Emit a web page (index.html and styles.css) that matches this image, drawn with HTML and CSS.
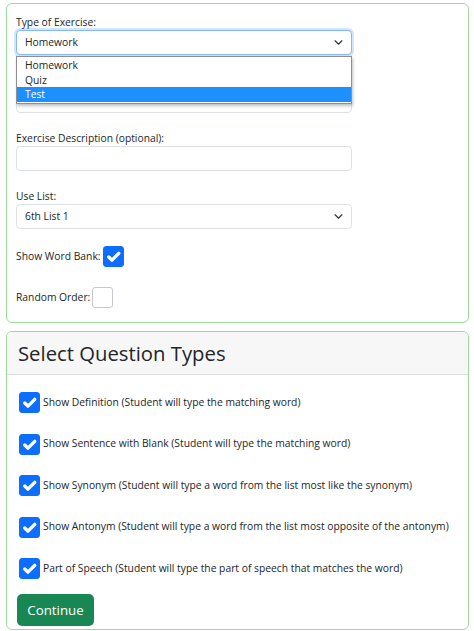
FILE: index.html
```html
<!DOCTYPE html>
<html lang="en">
<head>
<meta charset="utf-8">
<title>Exercise</title>
<link rel="stylesheet" href="styles.css">
</head>
<body>
<div class="card form-card">
  <div class="field">
    <label class="lbl">Type of Exercise:</label>
    <div class="select-wrap">
      <div class="control select focused">
        <span>Homework</span>
        <svg class="chev" viewBox="0 0 16 16" width="9" height="9"><path d="m2 5 6 6 6-6" fill="none" stroke="#343a40" stroke-width="2.2" stroke-linecap="round" stroke-linejoin="round"/></svg>
      </div>
      <ul class="dropdown">
        <li>Homework</li>
        <li>Quiz</li>
        <li class="active">Test</li>
      </ul>
    </div>
  </div>
  <div class="field">
    <label class="lbl" aria-label="Exercise Name"></label>
    <div class="control"></div>
  </div>
  <div class="field">
    <label class="lbl">Exercise Description (optional):</label>
    <div class="control"></div>
  </div>
  <div class="field">
    <label class="lbl">Use List:</label>
    <div class="control select">
      <span>6th List 1</span>
      <svg class="chev" viewBox="0 0 16 16" width="9" height="9"><path d="m2 5 6 6 6-6" fill="none" stroke="#343a40" stroke-width="2.2" stroke-linecap="round" stroke-linejoin="round"/></svg>
    </div>
  </div>
  <div class="inline-check first">
    <span>Show Word Bank:</span>
    <span class="box checked"><svg viewBox="0 0 20 20" width="21" height="21"><path d="m5.5 10.5 3 3 6.5-6.5" fill="none" stroke="#fff" stroke-width="3.2" stroke-linecap="round" stroke-linejoin="round"/></svg></span>
  </div>
  <div class="inline-check second">
    <span>Random Order:</span>
    <span class="box"></span>
  </div>
</div>

<div class="card types-card">
  <div class="card-header">Select Question Types</div>
  <div class="card-body">
    <div class="rows">
      <div class="row">
        <span class="box checked"><svg viewBox="0 0 20 20" width="21" height="21"><path d="m5.5 10.5 3 3 6.5-6.5" fill="none" stroke="#fff" stroke-width="3.2" stroke-linecap="round" stroke-linejoin="round"/></svg></span>
        <span>Show Definition (Student will type the matching word)</span>
      </div>
      <div class="row">
        <span class="box checked"><svg viewBox="0 0 20 20" width="21" height="21"><path d="m5.5 10.5 3 3 6.5-6.5" fill="none" stroke="#fff" stroke-width="3.2" stroke-linecap="round" stroke-linejoin="round"/></svg></span>
        <span>Show Sentence with Blank (Student will type the matching word)</span>
      </div>
      <div class="row">
        <span class="box checked"><svg viewBox="0 0 20 20" width="21" height="21"><path d="m5.5 10.5 3 3 6.5-6.5" fill="none" stroke="#fff" stroke-width="3.2" stroke-linecap="round" stroke-linejoin="round"/></svg></span>
        <span>Show Synonym (Student will type a word from the list most like the synonym)</span>
      </div>
      <div class="row">
        <span class="box checked"><svg viewBox="0 0 20 20" width="21" height="21"><path d="m5.5 10.5 3 3 6.5-6.5" fill="none" stroke="#fff" stroke-width="3.2" stroke-linecap="round" stroke-linejoin="round"/></svg></span>
        <span>Show Antonym (Student will type a word from the list most opposite of the antonym)</span>
      </div>
      <div class="row">
        <span class="box checked"><svg viewBox="0 0 20 20" width="21" height="21"><path d="m5.5 10.5 3 3 6.5-6.5" fill="none" stroke="#fff" stroke-width="3.2" stroke-linecap="round" stroke-linejoin="round"/></svg></span>
        <span>Part of Speech (Student will type the part of speech that matches the word)</span>
      </div>
    </div>
    <button class="btn">Continue</button>
  </div>
</div>
</body>
</html>
```
FILE: styles.css
```css
html, body {
  margin: 0;
  background: #fff;
}
body {
  padding: 3px 5px 0 6px;
  font-family: "Open Sans", "Liberation Sans", sans-serif;
  font-size: 10.3px;
  line-height: 1.5;
  color: #212529;
}
.card {
  width: 463px;
  box-sizing: border-box;
  border: 1px solid #9dd89d;
  border-radius: 6px;
  background: #fff;
}
.form-card {
  height: 320px;
  padding: 10px 9px 0;
}
.field {
  margin-bottom: 17px;
}
.lbl {
  display: block;
  height: 16px;
  line-height: 16px;
}
.select-wrap {
  position: relative;
}
.control {
  width: 336px;
  height: 25px;
  box-sizing: border-box;
  border: 1px solid #dee2e6;
  border-radius: 4px;
  padding: 0 8px;
  display: flex;
  align-items: center;
  justify-content: space-between;
  background: #fff;
}
.control.focused {
  border-color: #86b7fe;
  box-shadow: 0 0 0 2px rgba(13, 110, 253, 0.18);
}
.chev {
  margin-right: 0;
}
.dropdown {
  position: absolute;
  top: 26px;
  left: 0;
  width: 336px;
  box-sizing: border-box;
  margin: 0;
  padding: 1px 0 1px;
  list-style: none;
  background: #fff;
  border: 1px solid #8f8f8f;
  box-shadow: 1px 2px 3px rgba(0, 0, 0, 0.25);
  z-index: 5;
}
.dropdown li {
  height: 14.5px;
  line-height: 14.5px;
  padding-left: 8px;
}
.dropdown li.active {
  background: #1e8fff;
  color: #fff;
}
.inline-check {
  display: flex;
  align-items: center;
  height: 21px;
  gap: 2px;
}
.inline-check.first {
  margin-top: 6px;
}
.inline-check.second {
  margin-top: 20px;
}
.box {
  width: 21px;
  height: 21px;
  box-sizing: border-box;
  border: 1px solid #c6c9cc;
  border-radius: 3px;
  background: #fff;
  display: inline-flex;
  flex: none;
}
.box.checked {
  background: #0d6efd;
  border-color: #0d6efd;
}
.box svg {
  margin: -1px;
}
.types-card {
  margin-top: 8px;
  height: 299px;
}
.card-header {
  height: 43px;
  box-sizing: border-box;
  padding: 0 11px;
  display: flex;
  align-items: center;
  font-size: 20.3px;
  line-height: 1.2;
  background: #f7f7f7;
  border-bottom: 1px solid #dcdcdc;
  border-radius: 5px 5px 0 0;
}
.card-body {
  padding: 17px 12px 0 12px;
}
.rows {
  display: flex;
  flex-direction: column;
  gap: 20.5px;
}
.row {
  display: flex;
  align-items: center;
  gap: 3px;
  height: 21px;
  white-space: nowrap;
}
.btn {
  margin-top: 14.5px;
  margin-left: -2px;
  height: 32px;
  width: 77px;
  border: none;
  border-radius: 5px;
  background: #198754;
  color: #fff;
  font-family: inherit;
  font-size: 13.3px;
  padding: 0;
}
```
